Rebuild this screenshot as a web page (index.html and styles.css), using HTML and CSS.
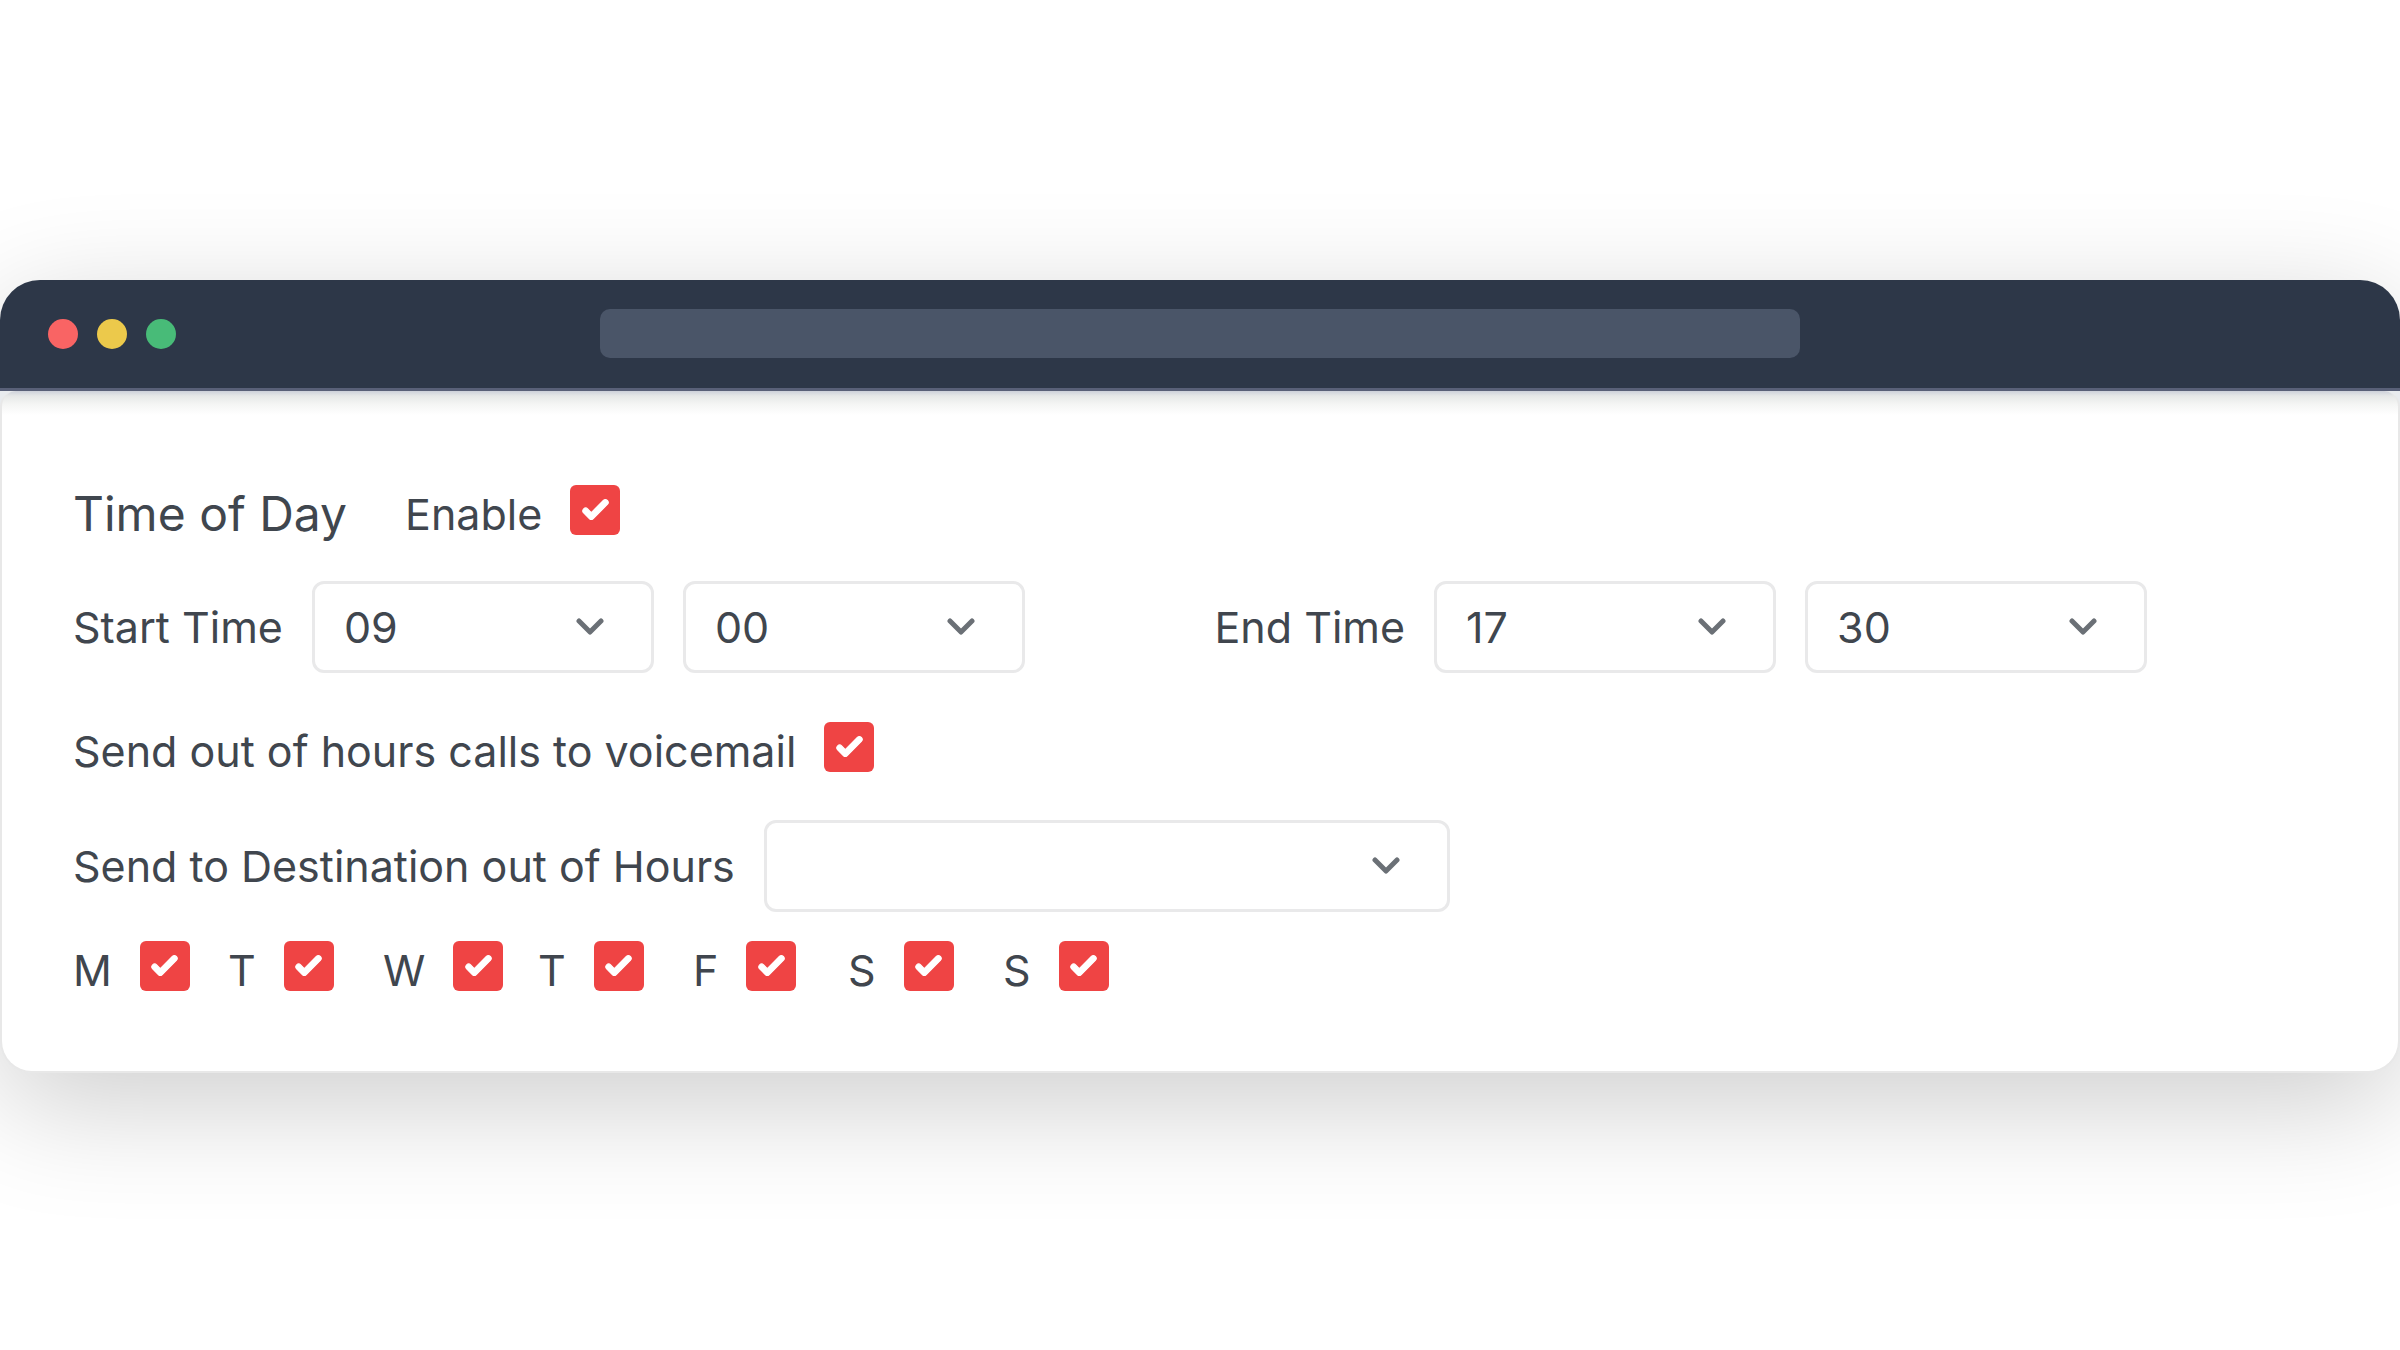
FILE: index.html
```
<!DOCTYPE html>
<html lang="en">
<head>
    <meta charset="UTF-8">
    <meta name="viewport" content="width=device-width, initial-scale=1.0">
    <title>Time of Day</title>
    <link rel="stylesheet" href="styles.css">
</head>
<body>

<div class="window">
    <header class="titlebar">
        <div class="lights">
            <span class="light red"></span>
            <span class="light yellow"></span>
            <span class="light green"></span>
        </div>
        <div class="address"></div>
    </header>

    <form class="panel">
        <div class="row heading">
            <h2>Time of Day</h2>
            <label class="check">Enable <input type="checkbox" checked></label>
        </div>

        <div class="times">
            <div class="row">
                <label for="startHour">Start Time</label>
                <select id="startHour"><option>09</option></select>
                <select id="startMinute" aria-label="Start minute"><option>00</option></select>
            </div>
            <div class="row">
                <label for="endHour">End Time</label>
                <select id="endHour"><option>17</option></select>
                <select id="endMinute" aria-label="End minute"><option>30</option></select>
            </div>
        </div>

        <div class="row voicemail">
            <label class="check">Send out of hours calls to voicemail <input type="checkbox" checked></label>
        </div>

        <div class="row destination">
            <label for="destination">Send to Destination out of Hours</label>
            <select id="destination" class="wide"><option></option></select>
        </div>

        <div class="days">
            <label class="check">M <input type="checkbox" checked></label>
            <label class="check">T <input type="checkbox" checked></label>
            <label class="check">W <input type="checkbox" checked></label>
            <label class="check">T <input type="checkbox" checked></label>
            <label class="check">F <input type="checkbox" checked></label>
            <label class="check">S <input type="checkbox" checked></label>
            <label class="check">S <input type="checkbox" checked></label>
        </div>
    </form>
</div>

</body>
</html>
```
FILE: styles.css
```
* {
    box-sizing: border-box;
}

body {
    margin: 0;
    min-height: 100vh;
    padding-top: 2px;
    display: flex;
    flex-direction: column;
    justify-content: center;
    background-color: #fff;
    color: #40464e;
    font-family: Inter, "Liberation Sans", sans-serif;
    font-size: 43px;
    line-height: 50px;
    overflow-x: hidden;
}

/* Browser window */
.window {
    background-color: #e8ebee;
    border-radius: 40px 40px 32px 32px;
    box-shadow: 0 30px 120px rgba(0, 0, 0, 0.2);
}

.titlebar {
    display: grid;
    grid-template-columns: 1fr 2fr 1fr;
    align-items: center;
    height: 111px;
    background-color: #2d3748;
    border-bottom: 3px solid #596078;
    border-radius: 40px 40px 0 0;
}

.lights {
    display: flex;
    gap: 19px;
    padding-left: 48px;
}

.light {
    width: 30px;
    height: 30px;
    border-radius: 50%;
}

.red {
    background-color: #f96464;
}

.yellow {
    background-color: #ecc94b;
}

.green {
    background-color: #48bb78;
}

.address {
    height: 49px;
    background-color: #4a5568;
    border-radius: 10px;
}

/* Settings form */
.panel {
    padding: 94px 71px 72px;
    background: linear-gradient(#cdd1da, #e6e8e8 5px, #f4f5f4 13px, #fff 24px);
    border: 2px solid #e8e8e8;
    border-top: none;
    border-radius: 16px 16px 32px 32px;
}

.row {
    display: flex;
    align-items: center;
    gap: 29px;
}

.heading {
    gap: 58px;
}

h2 {
    margin: 0;
    font-size: 48px;
    font-weight: 400;
}

.check {
    display: flex;
    align-items: center;
    gap: 28px;
}

.times {
    display: grid;
    grid-template-columns: 1fr 1fr;
    gap: 29px;
    margin-top: 38px;
}

.voicemail {
    margin-top: 49px;
}

.destination {
    margin-top: 40px;
}

.days {
    display: grid;
    grid-template-columns: repeat(7, 155px);
    margin-top: 29px;
}

input {
    appearance: none;
    width: 50px;
    height: 50px;
    margin: 0 0 8px;
    border-radius: 6px;
    background: #ef4444 url("data:image/svg+xml,%3Csvg xmlns='http://www.w3.org/2000/svg' viewBox='0 0 16 16' fill='white' stroke='white' stroke-width='.4'%3E%3Cpath d='M12.207 4.793a1 1 0 010 1.414l-5 5a1 1 0 01-1.414 0l-2-2a1 1 0 011.414-1.414L6.5 9.086l4.293-4.293a1 1 0 011.414 0z'/%3E%3C/svg%3E") center / 90% no-repeat;
}

select {
    appearance: none;
    width: 342px;
    height: 92px;
    padding: 0 80px 0 29px;
    border: 3px solid #e9e9ea;
    border-radius: 12px;
    background: #fff url("data:image/svg+xml,%3Csvg xmlns='http://www.w3.org/2000/svg' viewBox='0 0 28 20' fill='none' stroke='%236b7076' stroke-width='5' stroke-linecap='round' stroke-linejoin='round'%3E%3Cpath d='M3 4l11 11L25 4'/%3E%3C/svg%3E") right 47px center / 28px 20px no-repeat;
    color: inherit;
    font: inherit;
}

.wide {
    width: 686px;
}
```
